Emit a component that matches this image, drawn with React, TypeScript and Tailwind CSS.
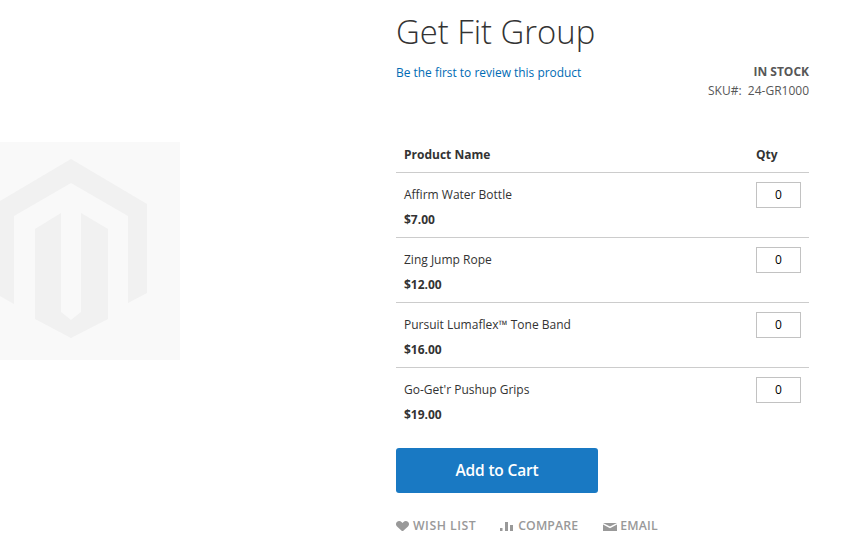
const products = [
  { name: 'Affirm Water Bottle', price: '$7.00' },
  { name: 'Zing Jump Rope', price: '$12.00' },
  { name: 'Pursuit Lumaflex™ Tone Band', price: '$16.00' },
  { name: 'Go-Get\'r Pushup Grips', price: '$19.00' },
];

function Placeholder() {
  return (
    <div className="mt-[142px] h-[218px] w-[180px] bg-[#f9f9f9]">
      <svg viewBox="0 142 180 218" className="h-full w-full" fill="#f1f1f1">
        <path d="M0 201L71 159L147 204V293L128 303V216L71 183L14 216V304L0 296Z" />
        <path d="M35 229L61 213V312L71 320L81 312V213L108 229V319L71 338L35 319Z" />
      </svg>
    </div>
  );
}

function ActionLink({ icon, label, className }: { icon: React.ReactNode; label: string; className: string }) {
  return (
    <a className={`flex items-center text-[12.3px] font-semibold uppercase leading-[18px] text-[#999] ${className}`}>
      {icon}
      {label}
    </a>
  );
}

export default function App() {
  return (
    <div className="flex h-[545px] w-[851px] overflow-hidden bg-white font-['Open_Sans',sans-serif] text-[14px] text-[#333]">
      <div className="w-[396px] shrink-0">
        <Placeholder />
      </div>
      <div className="w-[413px] shrink-0">
        <h1 className="pt-[10px] text-[32.8px] font-light leading-[44px]">Get Fit Group</h1>
        <div className="mt-[8px] flex items-start justify-between">
          <a className="mt-[2px] text-[11.95px] leading-[18px] text-[#006bb4]">Be the first to review this product</a>
          <div className="text-right text-[12px] leading-[19px]">
            <div className="font-bold uppercase text-[#575757]">In stock</div>
            <div className="text-[#575757]">SKU#:&nbsp;&nbsp;24-GR1000</div>
          </div>
        </div>
        <table className="mt-[36px] w-full border-collapse text-[12px] text-[#333]">
          <thead>
            <tr className="h-[36px] border-b border-[#ccc] text-left font-bold">
              <th className="px-[8px] pt-[2px]">Product Name</th>
              <th className="w-[53px] pt-[2px] font-bold">Qty</th>
            </tr>
          </thead>
          <tbody>
            {products.map((p) => (
              <tr key={p.name} className="h-[65px] border-b border-[#ccc] last:border-b-0">
                <td className="px-[8px] align-top">
                  <div className="mt-[13px] leading-[18px]">{p.name}</div>
                  <div className="mt-[7px] font-bold leading-[18px]">{p.price}</div>
                </td>
                <td className="align-top">
                  <div className="mt-[9px] flex h-[26px] w-[45px] items-center justify-center border border-[#c2c2c2] text-[12px] text-black">
                    0
                  </div>
                </td>
              </tr>
            ))}
          </tbody>
        </table>
        <button className="mt-[16px] h-[45px] w-[202px] rounded-[3px] bg-[#1979c3] text-[15.5px] font-semibold tracking-[-0.15px] text-white">
          Add to Cart
        </button>
        <div className="mt-[24px] flex items-center gap-[24px]">
          <ActionLink
            label="Wish List"
            className="gap-[4px] tracking-[0.5px]"
            icon={
              <svg viewBox="0 0 13 10.5" className="h-[10.5px] w-[13px]" fill="#999">
                <path d="M6.5 10.5L1 5.6C-.4 4.2-.3 2 .9 .9 2.2-.3 4.3-.3 5.5 .9L6.5 1.9 7.5 .9C8.7-.3 10.8-.3 12.1 .9 13.3 2 13.4 4.2 12 5.6Z" />
              </svg>
            }
          />
          <ActionLink
            label="Compare"
            className="gap-[5px] tracking-[0.1px]"
            icon={
              <svg viewBox="0 0 13 9" className="h-[9px] w-[13px]" fill="#999">
                <rect x="0" y="6" width="2.5" height="3" />
                <rect x="5" y="0" width="3" height="9" />
                <rect x="10" y="3" width="3" height="6" />
              </svg>
            }
          />
          <ActionLink
            label="Email"
            className="ml-[1px] gap-[3px] tracking-[0.2px]"
            icon={
              <svg viewBox="0 0 14 8" className="mt-[1px] h-[8px] w-[14px]" fill="#999">
                <path d="M0 0H14L7 3.6Z" />
                <path d="M0 1.5L7 5.2L14 1.5V8H0Z" />
              </svg>
            }
          />
        </div>
      </div>
    </div>
  );
}
